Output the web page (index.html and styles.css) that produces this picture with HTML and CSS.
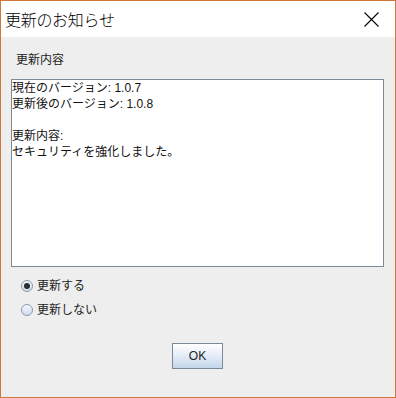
FILE: index.html
```html
<!DOCTYPE html>
<html lang="ja">
<head>
    <meta charset="UTF-8">
    <title>更新のお知らせ</title>
    <link rel="stylesheet" href="styles.css">
</head>
<body>
    <div class="window">
        <div class="titlebar">
            <span class="title">更新のお知らせ</span>
            <button class="close-btn" aria-label="閉じる">
                <svg width="15" height="15" viewBox="0 0 15 15" fill="none" stroke="#000" stroke-width="1.1">
                    <line x1="0.5" y1="0.5" x2="14.5" y2="14.5"></line>
                    <line x1="14.5" y1="0.5" x2="0.5" y2="14.5"></line>
                </svg>
            </button>
        </div>

        <div class="content">
            <div class="group-label">更新内容</div>
            <div class="text-box">
                <div>現在のバージョン: 1.0.7</div>
                <div>更新後のバージョン: 1.0.8</div>
                <div>&nbsp;</div>
                <div>更新内容:</div>
                <div>セキュリティを強化しました。</div>
            </div>

            <div class="radio-group">
                <div class="radio-row">
                    <span class="radio checked"></span>
                    <span class="radio-label">更新する</span>
                </div>
                <div class="radio-row">
                    <span class="radio"></span>
                    <span class="radio-label">更新しない</span>
                </div>
            </div>

            <div class="actions">
                <button class="ok-btn">OK</button>
            </div>
        </div>
    </div>
</body>
</html>
```

FILE: styles.css
```css
* {
    margin: 0;
    padding: 0;
    box-sizing: border-box;
}

body {
    font-family: "Liberation Sans", "Noto Sans CJK JP", sans-serif;
    background-color: #ffffff;
}

.window {
    width: 396px;
    height: 398px;
    border: 1px solid #d0783c;
    display: flex;
    flex-direction: column;
    background-color: #eeeeee;
}

.titlebar {
    height: 36px;
    background-color: #ffffff;
    display: flex;
    align-items: center;
    justify-content: space-between;
    padding-left: 4px;
    padding-right: 16px;
}

.title {
    font-family: "Noto Sans CJK JP", sans-serif;
    font-size: 16px;
    font-weight: 300;
    color: #000;
    letter-spacing: -0.3px;
}

.close-btn {
    background: none;
    border: none;
    width: 15px;
    height: 15px;
    display: flex;
}

.content {
    flex: 1;
    padding: 15px 11px 0 10px;
    color: #222;
    font-size: 12px;
}

.group-label {
    padding-left: 5px;
    line-height: 16px;
    height: 16px;
    margin-bottom: 11px;
}

.text-box {
    height: 188px;
    background-color: #ffffff;
    border: 1px solid #7a8a99;
    line-height: 16px;
    color: #111;
}

.radio-group {
    margin-top: 7px;
    padding-left: 10px;
}

.radio-row {
    height: 24px;
    display: flex;
    align-items: center;
    gap: 4px;
}

.radio {
    width: 12px;
    height: 12px;
    border-radius: 50%;
    border: 1px solid #8a9aab;
    background: linear-gradient(#f4f8fc, #cfdcec);
    display: flex;
    align-items: center;
    justify-content: center;
}

.radio.checked::after {
    content: "";
    width: 6px;
    height: 6px;
    border-radius: 50%;
    background-color: #2a2f36;
}

.radio-label {
    line-height: 16px;
}

.actions {
    display: flex;
    justify-content: center;
    margin-top: 21px;
}

.ok-btn {
    width: 51px;
    height: 26px;
    border: 1px solid #7a8a99;
    background: linear-gradient(#ffffff, #e6eef8 45%, #c4d6ea);
    font-family: "Liberation Sans", sans-serif;
    font-size: 12px;
    color: #222;
}
```
